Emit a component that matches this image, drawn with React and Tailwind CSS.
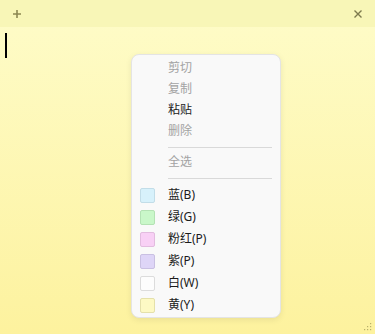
import React from "react";

const edits = [
  { label: "剪切", disabled: true },
  { label: "复制", disabled: true },
  { label: "粘贴", disabled: false },
  { label: "删除", disabled: true },
];

const colours = [
  { label: "蓝(B)", fill: "bg-[#d7f1fb]", border: "border-[#c2dde8]" },
  { label: "绿(G)", fill: "bg-[#c9f7c9]", border: "border-[#b4e2b4]" },
  { label: "粉红(P)", fill: "bg-[#f8d0f5]", border: "border-[#e2bcdf]" },
  { label: "紫(P)", fill: "bg-[#ded5f7]", border: "border-[#c9c0e2]" },
  { label: "白(W)", fill: "bg-[#fdfdfd]", border: "border-[#dcdcdc]" },
  { label: "黄(Y)", fill: "bg-[#fdf9c4]", border: "border-[#e4e0aa]" },
];

export default function App() {
  return (
    <div
      className="relative w-[375px] h-[334px] overflow-hidden flex flex-col bg-gradient-to-b from-[#fefcc9] to-[#fdf29e]"
      style={{ fontFamily: '"Noto Sans", "Noto Sans CJK SC", sans-serif' }}
    >
      {/* title bar */}
      <div className="h-[27px] shrink-0 bg-[#f8f6b7] flex items-center justify-between px-[12px]">
        <svg width="10" height="10" viewBox="0 0 10 10">
          <path d="M5 1v8M1 5h8" stroke="#8c8852" strokeWidth="1.6" />
        </svg>
        <svg width="10" height="10" viewBox="0 0 10 10">
          <path d="M1.5 1.5l7 7M8.5 1.5l-7 7" stroke="#7d7a4d" strokeWidth="1.4" />
        </svg>
      </div>

      {/* note body */}
      <div className="flex-1 pl-[5px] pt-[6px]">
        <div className="w-[1.5px] h-[25px] bg-black" />
      </div>

      {/* resize grip */}
      <svg className="absolute right-[3px] bottom-[3px]" width="9" height="9" viewBox="0 0 9 9">
        <g fill="#b8b06a">
          <rect x="7" y="1" width="1.2" height="1.2" />
          <rect x="4" y="4" width="1.2" height="1.2" />
          <rect x="7" y="4" width="1.2" height="1.2" />
          <rect x="1" y="7" width="1.2" height="1.2" />
          <rect x="4" y="7" width="1.2" height="1.2" />
          <rect x="7" y="7" width="1.2" height="1.2" />
        </g>
      </svg>

      {/* context menu */}
      <div className="absolute left-[131px] top-[54px] w-[150px] rounded-[8px] border border-[#e4e4e4] bg-[#f9f9f9] shadow-[0_2px_6px_rgba(0,0,0,0.08)] pt-[2px] pb-[1px] text-[12px]">
        {edits.map((e) => (
          <div
            key={e.label}
            className={`h-[21px] flex items-center pl-[36px] ${e.disabled ? "text-[#a3a3a3]" : "text-[#1b1b1b]"}`}
          >
            {e.label}
          </div>
        ))}
        <div className="ml-[36px] mr-[8px] mt-[6px] mb-[3px] h-px bg-[#d9d9d9]" />
        <div className="h-[21px] flex items-center pl-[36px] text-[#a3a3a3]">全选</div>
        <div className="ml-[36px] mr-[8px] mt-[6px] mb-[5px] h-px bg-[#d9d9d9]" />
        {colours.map((c) => (
          <div key={c.label} className="h-[22px] flex items-center pl-[8px] text-[#1b1b1b]">
            <span className={`w-[15px] h-[15px] rounded-[2px] border ${c.fill} ${c.border}`} />
            <span className="ml-[13px]">{c.label}</span>
          </div>
        ))}
      </div>
    </div>
  );
}
